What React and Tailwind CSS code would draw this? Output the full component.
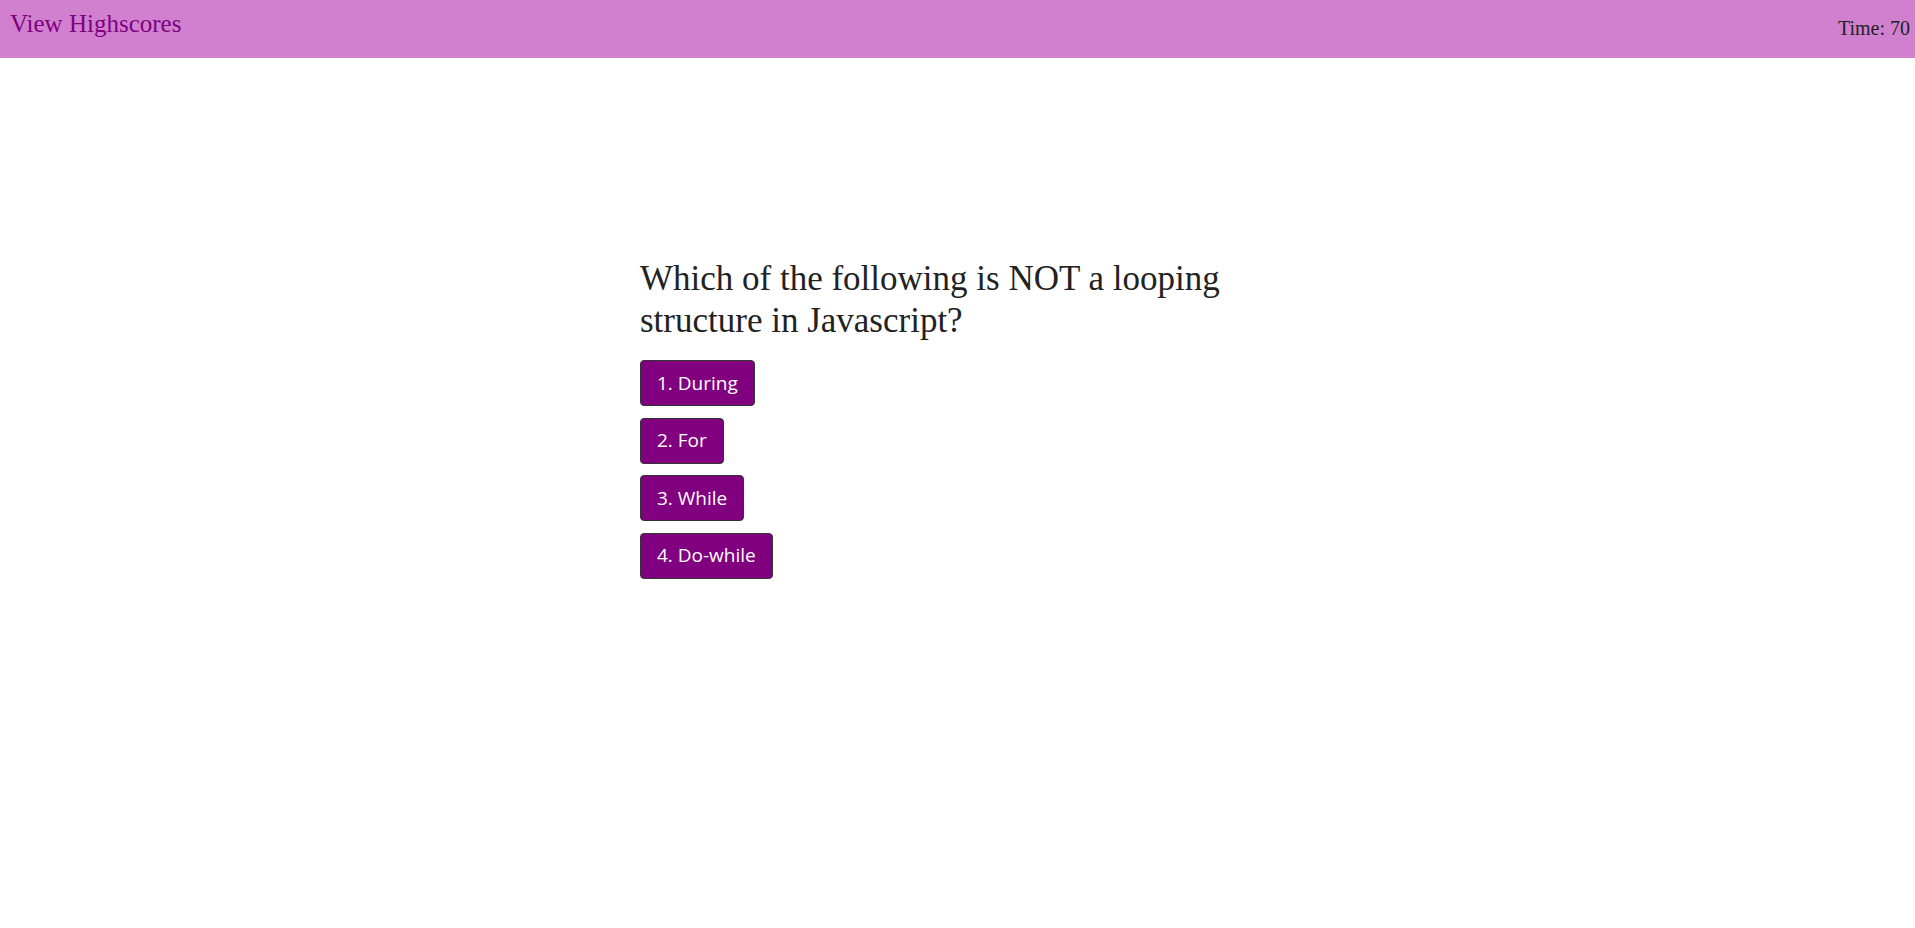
import { useState } from "react";

const choices = ["1. During", "2. For", "3. While", "4. Do-while"];

export default function App() {
  const [time] = useState(70);

  return (
    <div className="min-h-screen bg-white" style={{ fontFamily: '"Liberation Serif", serif' }}>
      {/* top bar */}
      <header className="flex h-[58px] items-start justify-between bg-[#d180d0]">
        <a href="#" className="pl-[10px] pt-[9px] text-[25px] leading-[29px] text-[#800080]">
          View Highscores
        </a>
        <div className="pr-[5px] pt-[17px] text-[20px] leading-[23px] text-[#222]">Time: {time}</div>
      </header>

      <main className="mx-auto w-[635px] pt-[200px]">
        <h2 className="text-[35px] leading-[42px] text-[#222]">
          Which of the following is NOT a looping structure in Javascript?
        </h2>
        <div className="mt-[18px] flex flex-col items-start gap-[11.5px]">
          {choices.map((c) => (
            <button
              key={c}
              className="h-[46px] rounded-[4px] border border-[#333] bg-[#800080] px-[16px] text-[19px] text-white"
              style={{ fontFamily: '"Open Sans", "Noto Sans", sans-serif' }}
            >
              {c}
            </button>
          ))}
        </div>
      </main>
    </div>
  );
}
